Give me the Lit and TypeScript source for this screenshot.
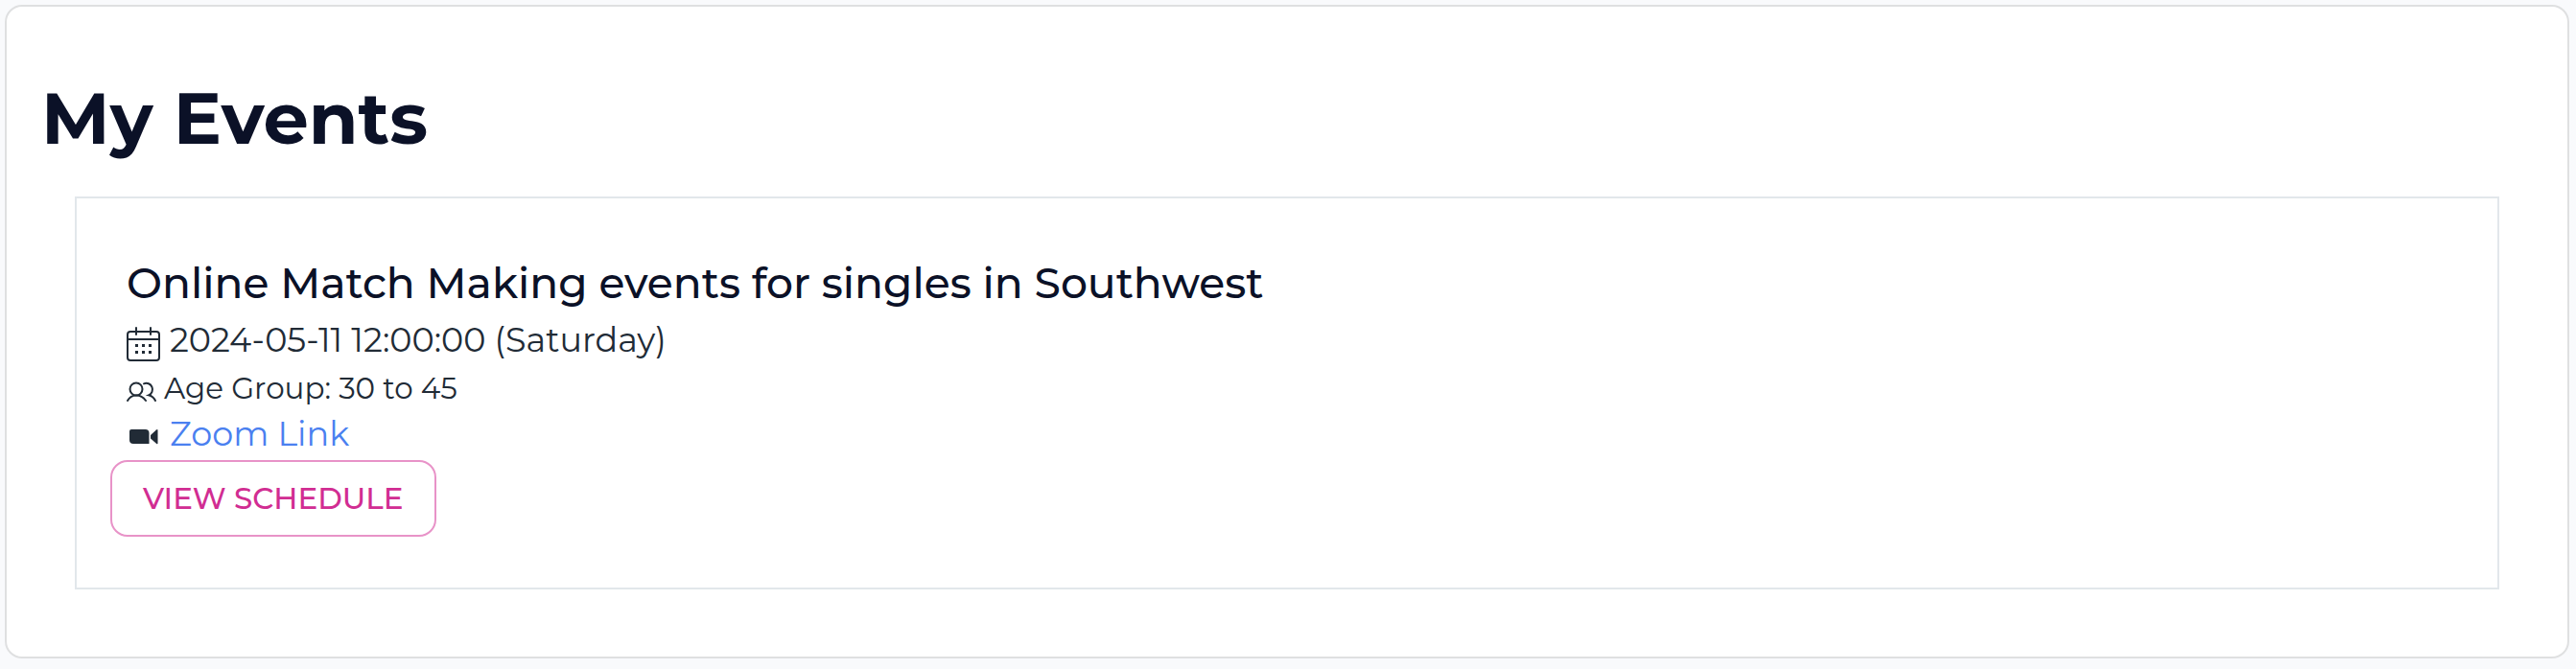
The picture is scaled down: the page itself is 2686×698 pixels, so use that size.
import { LitElement, html, css, svg } from "lit";
import { customElement, property } from "lit/decorators.js";

interface EventInfo {
  title: string;
  date: string;
  ageGroup: string;
}

const calendarIcon = html`<svg class="icon" width="36" height="36" viewBox="0 0 36 36" fill="none" stroke="currentColor" stroke-width="2" stroke-linecap="round" aria-hidden="true">
  <rect x="1" y="5" width="33" height="30" rx="3"></rect>
  <path d="M1 13h33M10 1v7M25 1v7"></path>
  ${[18, 25].map((y) => [9, 16, 23].map((x) => svg`<rect x=${x} y=${y} width="3" height="3" fill="currentColor" stroke="none"></rect>`))}
</svg>`;

const peopleIcon = html`<svg class="icon" width="32" height="22" viewBox="0 0 32 22" fill="none" stroke="currentColor" stroke-width="2" stroke-linecap="round" aria-hidden="true">
  <circle cx="10" cy="8" r="6.500"></circle>
  <path d="M1 20C3 16.500 6 14.500 10 14.500S17.500 16.500 20 20"></path>
  <path d="M18 2.300A6.200 6.200 0 1 1 23 14.300C26 15 28.500 17 30 20"></path>
</svg>`;

const videoIcon = html`<svg class="icon" width="36" height="18" viewBox="0 0 36 18" fill="currentColor" aria-hidden="true">
  <path d="M5 1H19.500A4 4 0 0 1 23.500 5V16H7A4 4 0 0 1 3 12V3A2 2 0 0 1 5 1Z"></path>
  <path d="M25 7L31 1.500Q32.500 .5 32.500 2V15.500Q32.500 17 31 15.800L25 10.500Z"></path>
</svg>`;

@customElement("event-card")
export class EventCard extends LitElement {
  @property({ attribute: false }) event!: EventInfo;

  static styles = css`
    :host { display: block; }
    .box {
      border: 2px solid #e2e7eb;
      padding: 58px 35px 53px;
    }
    .details { padding: 0 17px; color: #212b36; }
    .title {
      margin: 0;
      font-size: 44px;
      line-height: 60px;
      font-weight: 500;
      color: #0b1127;
    }
    .row { display: flex; align-items: center; margin: 0; gap: 9px; }
    .date { font-size: 35px; line-height: 60px; }
    .age { font-size: 31px; line-height: 40px; gap: 7px; }
    .zoom { font-size: 35px; line-height: 55px; }
    .icon { flex: none; display: block; margin-top: 7px; }
    .link { color: #4a80f0; text-decoration: none; }
    .schedule {
      display: block;
      box-sizing: border-box;
      height: 80px;
      padding: 0 32px;
      border: 2px solid #e893c8;
      border-radius: 18px;
      background: #fff;
      color: #d12d92;
      font-family: inherit;
      font-size: 31px;
      font-weight: 500;
      cursor: pointer;
    }
  `;

  render() {
    const { title, date, ageGroup } = this.event;
    return html`<article class="box">
      <div class="details">
        <h2 class="title">${title}</h2>
        <p class="row date">${calendarIcon}<span>${date}</span></p>
        <p class="row age">${peopleIcon}<span>Age Group: ${ageGroup}</span></p>
        <p class="row zoom">${videoIcon}<a class="link" href="#zoom">Zoom Link</a></p>
      </div>
      <button class="schedule" type="button">VIEW SCHEDULE</button>
    </article>`;
  }
}

@customElement("app-root")
export class AppRoot extends LitElement {
  private events: EventInfo[] = [
    {
      title: "Online Match Making events for singles in Southwest",
      date: "2024-05-11 12:00:00 (Saturday)",
      ageGroup: "30 to 45",
    },
  ];

  static styles = css`
    :host {
      display: block;
      box-sizing: border-box;
      min-height: 100vh;
      padding: 5px 7px 11px 5px;
      background: #f9fafc;
      font-family: Montserrat, Inter, sans-serif;
    }
    .panel {
      border: 2px solid #dfe0e1;
      border-radius: 18px;
      background: #fff;
      padding: 68px 36px 70px;
    }
    .heading {
      margin: 0 0 34px;
      font-size: 75px;
      line-height: 96px;
      font-weight: 700;
      color: #0b1127;
    }
    .list { display: grid; gap: 36px; padding: 0 35px; }
  `;

  render() {
    return html`<main class="panel">
      <h1 class="heading">My Events</h1>
      <div class="list">
        ${this.events.map((event) => html`<event-card .event=${event}></event-card>`)}
      </div>
    </main>`;
  }
}
